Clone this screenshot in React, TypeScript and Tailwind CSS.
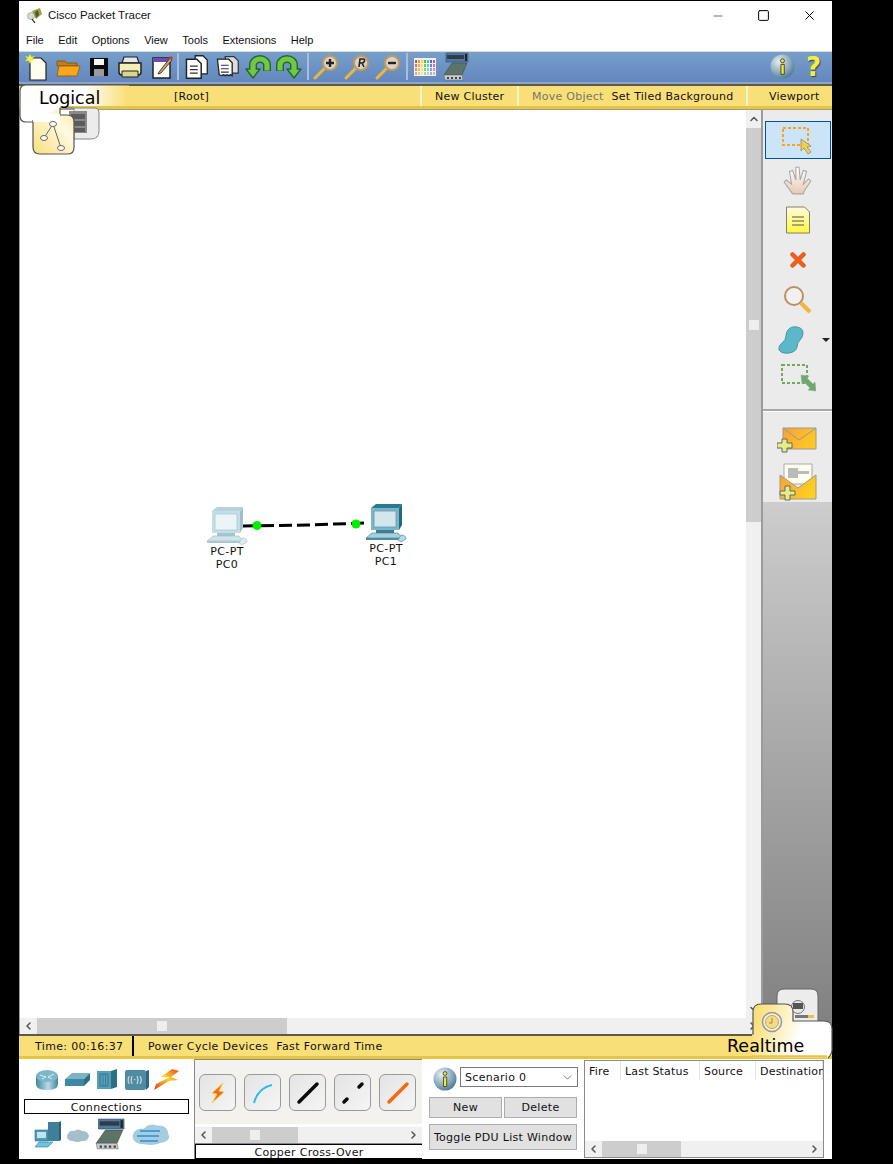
import { ChevronDown, ChevronLeft, ChevronRight, ChevronUp, Minus, Square, X } from 'lucide-react';
import type { ReactNode } from 'react';

const menus = ['File', 'Edit', 'Options', 'View', 'Tools', 'Extensions', 'Help'];

function Magnifier({ mark }: { mark: string }) {
  return (
    <svg viewBox="0 0 28 28" className="w-7 h-7">
      <path d="M3 25 13 15" stroke="#eeb73a" strokeWidth="3" strokeLinecap="round" />
      <circle cx="18" cy="10" r="7" fill="#d8d4cc" stroke="#c49a55" strokeWidth="2" />
      {mark === '+' && <path d="M14 10h8M18 6v8" stroke="#222" strokeWidth="2.4" />}
      {mark === '-' && <path d="M14 10h8" stroke="#222" strokeWidth="2.4" />}
      {mark === 'R' && <path d="M16 14l1-8h3q2 0 1.500 2t-2.500 2h-2M19 10l2 4" stroke="#222" strokeWidth="1.6" fill="none" />}
    </svg>
  );
}

function ArchArrow({ flip }: { flip?: boolean }) {
  return (
    <svg viewBox="0 0 28 26" className="w-7 h-[26px]">
      <g transform={flip ? 'matrix(-1 0 0 1 28 0)' : undefined}>
        <path d="M9 15v-4a7 6 0 0 1 14 0v6" fill="none" stroke="#1c6a2b" strokeWidth="8" />
        <path d="M2 15h14l-7 9z" fill="#74c644" stroke="#1c6a2b" strokeWidth="1.400" strokeLinejoin="round" />
        <path d="M9 16v-5a7 6 0 0 1 14 0v5.500" fill="none" stroke="#74c644" strokeWidth="5.200" />
      </g>
    </svg>
  );
}

function ToolIcon({ children }: { children: ReactNode }) {
  return <div className="w-[31px] h-[31px] flex items-center justify-center shrink-0">{children}</div>;
}

function Sep({ wide }: { wide?: boolean }) {
  return <div className={`w-[2px] h-[27px] bg-[#a9bdd9] mr-[1px] shrink-0 ${wide ? 'ml-[3px]' : 'ml-[1px]'}`} />;
}

function MainToolbar() {
  return (
    <div className="h-[33px] flex items-center pl-[2px] pb-[1px] pr-[3px] bg-gradient-to-b from-[#769fcb] to-[#6487bd] border-t border-[#d9d9d9] border-b-2 border-b-[#8ca6c9] shrink-0">
      <ToolIcon>
        <svg viewBox="0 0 28 28" className="w-7 h-7">
          <path d="M7 5h11l5 5v17H7z" fill="#fffdf0" stroke="#222" strokeWidth="1.2" />
          <path d="M7 1l1.500 3L12 3 9.500 5.500 12 8l-3.500-.6L7 11 5.500 7.400 2 8l2.500-2.500L2 3l3.500 1z" fill="#f7f03c" />
        </svg>
      </ToolIcon>
      <ToolIcon>
        <svg viewBox="0 0 28 28" className="w-7 h-7">
          <path d="M3 8h8l2 2h10v3H3z" fill="#c77f0c" stroke="#73500f" strokeWidth=".8" />
          <path d="M5 13h21l-3 10H3z" fill="#fba51c" stroke="#8c5b0c" strokeWidth=".8" />
        </svg>
      </ToolIcon>
      <ToolIcon>
        <svg viewBox="0 0 28 28" className="w-7 h-7">
          <path d="M5 5h18v18H5z" fill="#0b0b0b" />
          <path d="M9 6h10v6H9z" fill="#f6f6f6" />
          <path d="M9 16h10v7H9z" fill="#9a9a9a" />
        </svg>
      </ToolIcon>
      <ToolIcon>
        <svg viewBox="0 0 28 28" className="w-7 h-7">
          <path d="M8 4h13l2 6H6z" fill="#e7e7e7" stroke="#222" strokeWidth="1.200" />
          <path d="M3 10h22v9q0 3-3 3H6q-3 0-3-3z" fill="#f6efb5" stroke="#222" strokeWidth="1.500" />
          <path d="M6 18h16v6H6z" fill="#d8d58c" stroke="#222" strokeWidth="1" />
        </svg>
      </ToolIcon>
      <ToolIcon>
        <svg viewBox="0 0 28 28" className="w-7 h-7">
          <path d="M6 5h17v20H6z" fill="#fff" stroke="#222" strokeWidth="1.500" />
          <path d="M6 5h17v4H6z" fill="#6e4da8" />
          <path d="M12 19 23 5l2 2-11 13-3 1z" fill="#d9a14e" stroke="#222" strokeWidth=".8" />
          <circle cx="24" cy="5" r="1.800" fill="#d33" />
        </svg>
      </ToolIcon>
      <Sep />
      <ToolIcon>
        <svg viewBox="0 0 30 30" className="w-[26px] h-[26px]">
          <path d="M14 2h9l5 5v16H14z" fill="#fff" stroke="#222" strokeWidth="1.500" />
          <path d="M4 6h12l5 5v17H4z" fill="#fff" stroke="#222" strokeWidth="1.700" />
          <path d="M8 14h9M8 18h9M8 22h9" stroke="#333" strokeWidth="1.500" />
        </svg>
      </ToolIcon>
      <ToolIcon>
        <svg viewBox="0 0 30 30" className="w-[26px] h-[26px]">
          <path d="M13 3h10l5 5v14H13z" fill="#ddd" stroke="#333" strokeWidth="1.400" />
          <path d="M4 6h13l4 4v15l-2-1-2 1-2-1-2 1-2-1-2 1-3-1z" fill="#fff" stroke="#222" strokeWidth="1.500" />
          <path d="M8 13h9M8 17h9M8 21h9" stroke="#333" strokeWidth="1.400" />
        </svg>
      </ToolIcon>
      <ToolIcon><ArchArrow /></ToolIcon>
      <ToolIcon><ArchArrow flip /></ToolIcon>
      <Sep wide />
      <ToolIcon><Magnifier mark="+" /></ToolIcon>
      <ToolIcon><Magnifier mark="R" /></ToolIcon>
      <ToolIcon><Magnifier mark="-" /></ToolIcon>
      <Sep wide />
      <ToolIcon>
        <svg viewBox="0 0 22 18" className="w-[22px] h-[18px]">
          <rect width="22" height="18" fill="#f5f2e8" />
          {[2, 6, 10, 14].map((y, r) =>
            ['#ef4a4a', '#f59a2c', '#ece03a', '#4fc04f', '#3fc0d8', '#4a6ae0', '#c050d0'].map((c, i) => (
              <rect key={`${y}-${c}`} x={1 + i * 3} y={y} width="2" height="3" fill={c} opacity={1 - r * 0.18} />
            )),
          )}
        </svg>
      </ToolIcon>
      <ToolIcon><NetworkModule className="w-[26px] h-[30px]" /></ToolIcon>
      <div className="flex-1" />
      <ToolIcon><InfoBall className="w-[25px] h-[25px]" /></ToolIcon>
      <ToolIcon>
        <span className="font-['DejaVu_Sans',sans-serif] font-bold text-[26px] leading-none text-[#f4ee3c] [text-shadow:1px_1px_1px_#33405f]">?</span>
      </ToolIcon>
    </div>
  );
}

function NetworkModule({ className }: { className: string }) {
  return (
    <svg viewBox="0 0 26 30" className={className}>
      <path d="M3 1h22v9H3z" fill="#4b7ba2" stroke="#2c4f6d" strokeWidth=".6" />
      <path d="M4 3h17v4H4z" fill="#333c44" />
      <path d="M22 2h2v7h-2z" fill="#222" />
      <path d="M9 11h15l-5 12H1z" fill="#5c7468" stroke="#34453c" strokeWidth=".5" />
      <path d="M1 23h18l1 5H2z" fill="#c9cdcf" stroke="#666" strokeWidth=".5" />
      <path d="M4 25h2v2H4zM8 25h2v2H8zM12 25h2v2h-2zM16 25h2v2h-2z" fill="#444" />
    </svg>
  );
}

function InfoBall({ className }: { className: string }) {
  return (
    <svg viewBox="0 0 24 24" className={className}>
      <defs>
        <radialGradient id="ballFill" cx="35%" cy="30%" r="80%">
          <stop offset="0%" stopColor="#e8eef2" />
          <stop offset="60%" stopColor="#88a8bc" />
          <stop offset="100%" stopColor="#47708e" />
        </radialGradient>
      </defs>
      <circle cx="12" cy="12" r="11.500" fill="url(#ballFill)" />
      <path d="M10.500 10h3.200v9.500h-3.200z" fill="#efe92f" stroke="#333" strokeWidth=".8" />
      <circle cx="12" cy="6.500" r="1.900" fill="#efe92f" stroke="#333" strokeWidth=".8" />
    </svg>
  );
}

function ClusterBar() {
  return (
    <div className="h-[25px] flex items-center shrink-0 bg-[#f9df78] border-t-2 border-[#5e5a48] border-b-[3px] border-b-[#e8c53e] text-[11px] text-[#111] tracking-[0.25px] font-['DejaVu_Sans',sans-serif]">
      <div className="w-[401px] pl-[155px] pt-[3px] h-full flex items-center">[Root]</div>
      <div className="w-[97px] h-full flex items-center pl-[13px] pt-[3px] border-l-2 border-[#fdf3c4]">New Cluster</div>
      <div className="w-[229px] h-full flex items-center pl-[13px] pt-[3px] gap-[8px] border-l-2 border-[#fdf3c4]">
        <span className="text-[#77776a]">Move Object</span>
        <span>Set Tiled Background</span>
      </div>
      <div className="flex-1 h-full flex items-center pl-[21px] pt-[3px] border-l-2 border-[#fdf3c4]">Viewport</div>
    </div>
  );
}

function PcIcon({ dark = false }: { dark?: boolean }) {
  return (
    <svg viewBox="0 0 44 40" className="w-[44px] h-10">
      <path d="M7 4 12 0h26l-3 4z" fill={dark ? '#2b7a93' : '#b6d3dc'} />
      <path d="M35 4l3-4v21l-3 5z" fill={dark ? '#1f6a82' : '#9dc2cd'} />
      <path d="M7 4h28v22H7z" fill={dark ? '#7fb4c6' : '#c6dde4'} />
      <path d="M10 7h22v16H10z" fill={dark ? '#d3e6ee' : '#ebf4f7'} stroke={dark ? '#5f9bb0' : '#a9cad4'} strokeWidth=".8" />
      <path d="M12 26h18v3H12z" fill={dark ? '#3a7f96' : '#a5c6d0'} />
      <path d="M8 29h26l4 5H2z" fill={dark ? '#a8cfdc' : '#cfe3e9'} stroke={dark ? '#3b7f96' : '#9cbdc8'} strokeWidth=".6" />
      <path d="M2 34h36v2H2z" fill={dark ? '#4b8ca3' : '#a9c8d2'} />
      <path d="M37 31q5 0 5 4l-5 3-3-2z" fill={dark ? '#bcd9e3' : '#dcebef'} stroke={dark ? '#3b7f96' : '#9cbdc8'} strokeWidth=".6" />
    </svg>
  );
}

function Device({ className, dark, name }: { className: string; dark?: boolean; name: string }) {
  return (
    <div className={`absolute w-[60px] flex flex-col items-center text-[11px] leading-[13px] tracking-[0.4px] text-[#111] font-['DejaVu_Sans',sans-serif] ${className}`}>
      <PcIcon dark={dark} />
      <span className="-mt-[2px]">PC-PT</span>
      <span>{name}</span>
    </div>
  );
}

function Canvas() {
  return (
    <div className="relative flex-1 bg-white">
      {/* link between the two PCs */}
      <svg className="absolute left-[220px] top-[400px] w-[150px] h-[30px]" viewBox="0 0 150 30">
        <path d="M3 16 67 15 126 13" stroke="#000" strokeWidth="3" strokeDasharray="13 5" fill="none" />
        <circle cx="17" cy="15.500" r="4.500" fill="#00f000" />
        <circle cx="116" cy="14" r="4.500" fill="#00f000" />
      </svg>
      <Device className="left-[177px] top-[397px]" name="PC0" />
      <Device className="left-[336px] top-[394px]" dark name="PC1" />
    </div>
  );
}

function VScroll() {
  return (
    <div className="w-[15px] bg-[#f0f0f0] flex flex-col shrink-0">
      <div className="h-[18px] flex items-center justify-center text-[#555]"><ChevronUp size={12} strokeWidth={3} /></div>
      <div className="h-[394px] bg-[#cdcdcd] flex items-center justify-center">
        <div className="w-[10px] h-[10px] bg-[#eeeeee]" />
      </div>
      <div className="flex-1" />
      <div className="h-[18px] flex items-center justify-center text-[#555]"><ChevronDown size={12} strokeWidth={3} /></div>
    </div>
  );
}

function HScroll({ thumb, grip }: { thumb: string; grip: string }) {
  return (
    <div className="h-[16px] bg-[#f0f0f0] flex items-center shrink-0 text-[#555]">
      <ChevronLeft size={12} strokeWidth={3} className="w-[17px] shrink-0" />
      <div className={`h-full bg-[#cdcdcd] flex items-center justify-center shrink-0 ${thumb}`}>
        <div className={`h-[10px] bg-[#eeeeee] ${grip}`} />
      </div>
      <div className="flex-1" />
      <ChevronRight size={12} strokeWidth={3} className="w-[17px] shrink-0" />
    </div>
  );
}

function SideTool({ children }: { children: ReactNode }) {
  return <div className="h-[40px] flex items-center justify-center shrink-0">{children}</div>;
}

function Sidebar() {
  return (
    <div className="w-[71px] flex flex-col shrink-0 border-l-2 border-[#9b9b9b]">
      <div className="h-[392px] bg-[#ebebeb] flex flex-col pt-[11px] shrink-0">
        <div className="h-[38px] ml-[2px] mr-[1px] mb-[1px] bg-[#cce4f7] border border-[#005499] flex items-center justify-center shrink-0">
          <svg viewBox="0 0 34 30" className="w-[34px] h-[30px]">
            <rect x="2" y="3" width="25" height="17" fill="none" stroke="#f5a51e" strokeWidth="2" strokeDasharray="3 2" />
            <path d="M20 14v12l3-3 4 6 3-2-4-5 4-1z" fill="#f5d23d" stroke="#888" strokeWidth=".8" />
          </svg>
        </div>
        <SideTool>
          <svg viewBox="0 0 30 30" className="w-[32px] h-[32px]">
            <defs>
              <linearGradient id="handFill" x1="0" y1="0" x2="0" y2="1">
                <stop offset="0%" stopColor="#ffffff" />
                <stop offset="100%" stopColor="#e6c9b4" />
              </linearGradient>
            </defs>
            <path d="M10 28 2 17l2-2 5 4-2-12 3-1 3 9 0-12h3l1 12 3-9 3 1-3 12 5-5 2 2-6 9-1 3z" fill="url(#handFill)" stroke="#a9a9a9" strokeWidth="1" />
          </svg>
        </SideTool>
        <SideTool>
          <svg viewBox="0 0 26 28" className="w-[26px] h-[28px]">
            <defs>
              <linearGradient id="noteFill" x1="0" y1="0" x2="0" y2="1">
                <stop offset="0%" stopColor="#fffde0" />
                <stop offset="100%" stopColor="#fff83a" />
              </linearGradient>
            </defs>
            <path d="M1.500 1h18l5 5v21h-23z" fill="url(#noteFill)" stroke="#808070" />
            <path d="M7 11h12M7 15h12M7 19h12" stroke="#8a8a70" strokeWidth="1.300" />
          </svg>
        </SideTool>
        <SideTool>
          <X size={22} strokeWidth={5} color="#e9601c" />
        </SideTool>
        <SideTool>
          <svg viewBox="0 0 32 32" className="w-8 h-8">
            <circle cx="12" cy="12" r="9" fill="#fff" fillOpacity=".3" stroke="#c08f5c" strokeWidth="2" />
            <path d="M19 19l9 9" stroke="#eeb73a" strokeWidth="4" />
          </svg>
        </SideTool>
        <div className="h-[40px] flex items-center shrink-0 relative">
          <svg viewBox="0 0 26 28" className="w-[26px] h-[28px] ml-[15px]">
            <path d="M10 4q3-4 9-3t6 6q0 4-3 7t-3 7q-1 5-8 6t-10-3q-1-4 3-7t4-7 2-6z" fill="#5cb8c9" stroke="#4a95a5" strokeWidth="1" />
          </svg>
          <div className="absolute right-[2px] top-[18px] w-0 h-0 border-l-4 border-r-4 border-t-4 border-l-transparent border-r-transparent border-t-[#222]" />
        </div>
        <SideTool>
          <svg viewBox="0 0 36 34" className="w-9 h-[34px]">
            <rect x="2" y="2" width="25" height="18" fill="none" stroke="#72a95c" strokeWidth="2" strokeDasharray="3 2" />
            <path d="M21 12l8 1-2 2 6 6 2-2 1 9-8-1 2-2-6-6-2 2z" fill="#6fa868" stroke="#8aa" strokeWidth=".5" />
          </svg>
        </SideTool>
        <div className="h-[2px] mt-[9px] bg-[#a8a8a8] border-b border-white shrink-0 box-content" />
        <div className="flex-1 flex flex-col items-center pt-[15px] gap-[10px]">
          <svg viewBox="0 0 40 26" className="w-10 h-[26px] shrink-0 -ml-[1px]">
            <path d="M6 1h33v21H6z" fill="url(#mailFill)" stroke="#999" />
            <path d="M6 1 22 13 39 1" fill="none" stroke="#999" />
            <path d="M5 12h5v4h5v5h-5v4H5v-4H0v-5h5z" fill="#e4ee88" stroke="#666" />
          </svg>
          <svg viewBox="0 0 38 38" className="w-[38px] h-[38px] shrink-0">
            <defs>
              <linearGradient id="mailFill" gradientUnits="userSpaceOnUse" x1="0" y1="0" x2="38" y2="26">
                <stop offset="0%" stopColor="#f59a3c" />
                <stop offset="100%" stopColor="#ffd11e" />
              </linearGradient>
            </defs>
            <path d="M5 1h28v20H5z" fill="#fdfdf0" stroke="#aaa" />
            <path d="M9 5h10v3h11v3H19v4H9z" fill="#bbb" />
            <path d="M1 12v24h36V12L19 25z" fill="url(#mailFill)" stroke="#999" />
            <path d="M6 23h5v5h5v4h-5v5H6v-5H1v-4h5z" fill="#e4ee88" stroke="#666" />
          </svg>
        </div>
      </div>
      <div className="flex-1 relative bg-gradient-to-b from-[#cdcdcd] to-[#808080]" />
    </div>
  );
}

function TimeBar() {
  return (
    <div className="h-[25px] flex items-center shrink-0 bg-[#f9df78] border-t-2 border-[#5e5a48] border-b-[3px] border-b-[#e8c53e] text-[11px] text-[#111] tracking-[0.35px] font-['DejaVu_Sans',sans-serif]">
      <div className="w-[115px] pl-[16px] pt-[3px] h-full flex items-center border-r-2 border-black">Time: 00:16:37</div>
      <div className="pl-[14px] pt-[3px] flex gap-[8px]">
        <span>Power Cycle Devices</span>
        <span>Fast Forward Time</span>
      </div>
    </div>
  );
}

function DeviceTypes() {
  return (
    <div className="w-[175px] bg-white flex flex-col items-center shrink-0 pt-[9px]">
      <svg viewBox="0 0 146 24" className="w-[146px] h-[24px] shrink-0">
        <defs>
          <linearGradient id="routerFill" x1="0" y1="0" x2="1" y2="0">
            <stop offset="0%" stopColor="#3f87a3" />
            <stop offset="55%" stopColor="#b9dbe5" />
            <stop offset="100%" stopColor="#3f87a3" />
          </linearGradient>
          <linearGradient id="boltFill" x1="0" y1="1" x2="1" y2="0">
            <stop offset="0%" stopColor="#e23a20" />
            <stop offset="55%" stopColor="#f9d423" />
            <stop offset="100%" stopColor="#ea4020" />
          </linearGradient>
        </defs>
        <path d="M2 7v9q0 6 11 6t11-6V7z" fill="url(#routerFill)" />
        <ellipse cx="13" cy="8" rx="11" ry="6" fill="#7fb6ca" />
        <path d="M6 7l6 2M20 6l-6 3M8 11l4-2M18 11l-4-2" stroke="#d6ecf2" strokeWidth="1" />
        <path d="M31 11 38 5h18l-6 6z" fill="#7db3c6" />
        <path d="M31 11h19v7H31z" fill="#3e8aa6" />
        <path d="M50 11l6-6v7l-6 6z" fill="#2c7088" />
        <path d="M63 3h14v18H63z" fill="#5c9db5" />
        <path d="M77 3l6-2v18l-6 2z" fill="#2c7088" />
        <path d="M66 6h8v12h-8z" fill="none" stroke="#2f7d98" strokeWidth="1" />
        <path d="M69 6v12M71.500 6v12" stroke="#2f7d98" strokeWidth=".8" />
        <rect x="91" y="2" width="21" height="20" rx="2" fill="#4f8ba3" />
        <path d="M112 3l3-1v17l-3 3z" fill="#2c6a82" />
        <text x="93" y="15" fontSize="8" fill="#fff" fontFamily="DejaVu Sans">((·))</text>
        <path d="M138 1l-11 8 9 0-14 7-2 6 15-9 9-1-7-3 8-6z" fill="url(#boltFill)" />
      </svg>
      <div className="w-[165px] h-[15px] mt-[7px] border border-black text-center text-[11px] leading-[15px] tracking-[0.3px] text-[#111] font-['DejaVu_Sans',sans-serif]">Connections</div>
      <svg viewBox="0 0 146 34" className="w-[146px] h-[34px] mt-[4px] shrink-0">
        <path d="M1 12h13v11H1z" fill="#4f9ab6" stroke="#2f6f88" strokeWidth=".6" />
        <path d="M3 14h9v6H3z" fill="#bfe4ef" />
        <path d="M14 4h11v19H14z" fill="#3f7f99" />
        <path d="M25 4l2-1v19l-2 1z" fill="#2c6278" />
        <path d="M5 24h14l-5 5H1z" fill="#6dc4dc" stroke="#2f7f98" strokeWidth=".6" />
        <path d="M33 18q2-6 7-5 4-3 8 0 6 0 7 5-1 6-7 5-5 2-9 0-6 0-6-5z" fill="#a5bfca" />
        <g transform="translate(61 0) scale(1.160 1.100)">
          <path d="M3 1h22v9H3z" fill="#4b7ba2" stroke="#2c4f6d" strokeWidth=".6" />
          <path d="M4 3h17v4H4z" fill="#333c44" />
          <path d="M22 2h2v7h-2z" fill="#222" />
          <path d="M9 11h15l-5 12H1z" fill="#5c7468" stroke="#34453c" strokeWidth=".5" />
          <path d="M1 23h18l1 5H2z" fill="#c9cdcf" stroke="#666" strokeWidth=".5" />
          <path d="M4 25h2v2H4zM8 25h2v2H8zM12 25h2v2h-2zM16 25h2v2h-2z" fill="#444" />
        </g>
        <path d="M99 18q1-8 11-7 5-6 14-3 9-1 10 8 3 6-5 8-10 4-18 2-12 0-12-8z" fill="#a4cde0" stroke="#8fbcd0" strokeWidth=".5" />
        <path d="M106 13h20M103 18h22M106 23h18" stroke="#4f9bd8" strokeWidth="2" />
      </svg>
    </div>
  );
}

function CableButton({ children }: { children: ReactNode }) {
  return (
    <div className="w-[37px] h-[37px] rounded-[6px] border border-[#9a9a9a] bg-gradient-to-br from-[#e4e4e4] to-[#f5f5f5] shrink-0 flex items-center justify-center">
      <svg viewBox="0 0 26 26" className="w-[26px] h-[26px]">{children}</svg>
    </div>
  );
}

function CablePanel() {
  return (
    <div className="w-[228px] flex flex-col shrink-0 border-l border-[#888]">
      <div className="flex-1 bg-[#f3f2ef] flex gap-[8px] pl-[4px] pt-[14px] border-t border-[#888]">
        <CableButton>
          <path d="M18 3 7 13l5 1-5 9 12-11-5-1z" fill="#f26a1c" stroke="#f5d23d" strokeWidth="1" />
        </CableButton>
        <CableButton>
          <path d="M4 23Q8 8 22 5" fill="none" stroke="#24bff0" strokeWidth="2" />
        </CableButton>
        <CableButton>
          <path d="M4 22 22 4" stroke="#0a0a0a" strokeWidth="3.500" strokeLinecap="round" />
        </CableButton>
        <CableButton>
          <path d="M4 22l3-3M19 7l3-3" stroke="#0a0a0a" strokeWidth="3.500" strokeLinecap="round" />
        </CableButton>
        <CableButton>
          <path d="M4 22 22 4" stroke="#f46a12" strokeWidth="3.500" strokeLinecap="round" />
        </CableButton>
      </div>
      <div className="border-t-[3px] border-white border-b border-b-[#888]">
        <HScroll thumb="w-[86px]" grip="w-[10px]" />
      </div>
      <div className="h-[15px] bg-white border border-black text-center text-[11px] leading-[15px] tracking-[0.3px] text-[#111] font-['DejaVu_Sans',sans-serif] -mr-[1px]">Copper Cross-Over</div>
    </div>
  );
}

function PduControls() {
  const btn = 'bg-[#e1e1e1] border border-[#adadad] text-[11px] tracking-[0.3px] text-[#111] flex items-center justify-center pt-[2px]';
  return (
    <div className="w-[162px] bg-white shrink-0 pl-[7px] pr-[6px] pt-[7px] flex flex-col font-['DejaVu_Sans',sans-serif]">
      <div className="flex items-start gap-[3px] h-[24px] pl-[4px]">
        <InfoBall className="w-6 h-6 shrink-0 mt-[1px]" />
        <div className="w-[118px] h-[20px] mt-[1px] border border-[#7a7a7a] flex items-center justify-between pl-[4px] pr-[3px] pt-[3px] text-[11px] tracking-[0.3px] text-[#111]">
          Scenario 0
          <ChevronDown size={13} strokeWidth={1.500} className="text-[#555] -mt-[2px]" />
        </div>
      </div>
      <div className="flex gap-[2px] mt-[7px]">
        <div className={`${btn} w-[73px] h-[21px]`}>New</div>
        <div className={`${btn} w-[73px] h-[21px]`}>Delete</div>
      </div>
      <div className={`${btn} w-[148px] h-[26px] mt-[6px]`}>Toggle PDU List Window</div>
    </div>
  );
}

function PduTable() {
  const cols = [
    { label: 'Fire', w: 'w-[36px]' },
    { label: 'Last Status', w: 'w-[79px]' },
    { label: 'Source', w: 'w-[56px]' },
    { label: 'Destination', w: 'w-[67px]' },
  ];
  return (
    <div className="w-[240px] h-[98px] mt-[1px] border border-[#8a8a8a] flex flex-col bg-white shrink-0 overflow-hidden font-['DejaVu_Sans',sans-serif]">
      <div className="h-[19px] flex text-[11px] tracking-[0.2px] text-[#111] shrink-0">
        {cols.map((c) => (
          <div key={c.label} className={`${c.w} pl-[4px] leading-[21px] border-r border-[#e5e5e5] whitespace-nowrap shrink-0`}>{c.label}</div>
        ))}
      </div>
      <div className="flex-1" />
      <HScroll thumb="w-[79px]" grip="w-[10px]" />
    </div>
  );
}

function Tabs() {
  return (
    <>
      {/* Logical tab with the physical tab behind it */}
      <svg className="absolute left-[19px] top-[84px] w-[110px] h-[72px]" viewBox="0 0 110 72">
        <defs>
          <linearGradient id="logicalFill" gradientUnits="userSpaceOnUse" x1="0" y1="0" x2="108" y2="0">
            <stop offset="0%" stopColor="#fff" />
            <stop offset="60%" stopColor="#fff" />
            <stop offset="100%" stopColor="#f9df78" />
          </linearGradient>
          <linearGradient id="logicalTab" x1="0" y1="1" x2="1" y2="0">
            <stop offset="0%" stopColor="#f9df78" />
            <stop offset="65%" stopColor="#fff9e2" />
            <stop offset="100%" stopColor="#fbe9a0" />
          </linearGradient>
        </defs>
        <path d="M41 24H76q4 0 4 4V47q0 8-8 8H55V24z" fill="#ececec" stroke="#888" />
        <path d="M50 27h18v22H50z" fill="#8a8a8a" />
        <path d="M52 30h14v5H52zM52 37h14v5H52zM52 44h14v4H52z" fill="#5c5c5c" />
        <path d="M1 7Q1 1 7 1H110V22H41V38H7Q1 38 1 32z" fill="url(#logicalFill)" />
        <path d="M110 1H7Q1 1 1 7V32Q1 38 7 38H14" fill="none" stroke="#555" strokeWidth="1.200" />
        <path d="M14 38V63Q14 70 21 70H49Q55 70 55 63V38Q55 31 48 31H41V24L14 38z" fill="url(#logicalTab)" />
        <path d="M14 36V63Q14 70 21 70H49Q55 70 55 63V38Q55 31 48 31H41V24" fill="none" stroke="#555" strokeWidth="1.200" />
        <path d="M14 36V30H41V38H14z" fill="url(#logicalFill)" />
        <path d="M34 40 25 54M34 40 42 64" stroke="#666" fill="none" />
        <ellipse cx="34" cy="40" rx="3.500" ry="2.500" fill="#fff" stroke="#666" />
        <ellipse cx="25" cy="54" rx="3.500" ry="2.500" fill="#fff" stroke="#666" />
        <ellipse cx="42" cy="64" rx="3.500" ry="2.500" fill="#fff" stroke="#666" />
      </svg>
      <span className="absolute left-[39px] top-[88px] text-[17.500px] leading-[20px] text-black font-['DejaVu_Sans',sans-serif]">Logical</span>

      {/* Realtime tab with the simulation tab behind it */}
      <svg className="absolute left-[752px] top-[988px] w-[81px] h-[71px]" viewBox="0 0 81 71">
        <defs>
          <linearGradient id="realtimeFill" x1="0" y1="0" x2="1" y2="0.2">
            <stop offset="8%" stopColor="#f9df78" />
            <stop offset="70%" stopColor="#fff" />
          </linearGradient>
        </defs>
        <path d="M25 36V8q0-7 7-7h27q7 0 7 7v28z" fill="#ececec" stroke="#666" />
        <circle cx="46" cy="19" r="6.500" fill="#e7e7e7" stroke="#777" />
        <path d="M41 15h10v6H41z" fill="#555" />
        <path d="M43 27h13v3H43z" fill="#777" />
        <path d="M56 27h6v3h-6z" fill="#e8c53e" />
        <path d="M1 46V24Q1 16 9 16H33Q41 16 41 24V33H72Q80 33 80 41V62Q80 66 76 70H0V46z" fill="url(#realtimeFill)" />
        <path d="M0 46H1V24Q1 16 9 16H33Q41 16 41 24V33H72Q80 33 80 41V62Q80 66 76 70" fill="none" stroke="#555" strokeWidth="1.200" />
        <path d="M0 68.500H75" stroke="#e8c53e" strokeWidth="2.500" />
        <circle cx="20" cy="34" r="9.500" fill="#f5f0da" stroke="#999" strokeWidth="1.500" />
        <circle cx="20" cy="34" r="6.500" fill="#f5dc80" stroke="#b9a970" />
        <path d="M20 30v5h-3" stroke="#998a4f" fill="none" />
      </svg>
      <span className="absolute left-[727px] top-[1036px] text-[17.500px] leading-[20px] text-black font-['DejaVu_Sans',sans-serif]">Realtime</span>
    </>
  );
}

export default function App() {
  return (
    <div className="relative w-[893px] h-[1164px] bg-black pl-[19px] pt-px overflow-hidden">
      <div className="w-[813px] h-[1158px] bg-white flex flex-col">
        {/* Title bar */}
        <div className="h-[27px] flex items-center shrink-0 pl-[8px] pt-[2px]">
          <svg viewBox="0 0 16 16" className="w-4 h-4">
            <path d="M5 3l8-3 2 6-6 5z" fill="#b99545" />
            <path d="M8 4l3-2 1 5-3 3z" fill="#2c6b30" />
            <circle cx="4" cy="8" r="3.500" fill="#cfe0cf" stroke="#777" strokeWidth=".5" />
            <path d="M5 11l3 4" stroke="#222" strokeWidth="1.200" />
          </svg>
          <span className="ml-[5px] pt-[1px] text-[11.500px] text-[#111] font-['Liberation_Sans',sans-serif]">Cisco Packet Tracer</span>
          <div className="flex-1" />
          <Minus size={14} strokeWidth={1} className="text-black mr-[32px]" />
          <Square size={13} strokeWidth={1} absoluteStrokeWidth className="text-black mr-[32px]" />
          <X size={15} strokeWidth={1} absoluteStrokeWidth className="text-black mr-[15px]" />
        </div>
        {/* Menu */}
        <div className="h-[23px] flex items-center shrink-0 pl-[7px] pt-[2px] gap-[14.500px] text-[11px] text-[#111] font-['Liberation_Sans',sans-serif]">
          {menus.map((m) => (
            <span key={m}>{m}</span>
          ))}
        </div>
        <MainToolbar />
        <ClusterBar />
        {/* Workspace */}
        <div className="flex-1 flex min-h-0 border-t border-[#9b9b9b]">
          <div className="flex-1 flex flex-col min-w-0 border-l border-[#9b9b9b]">
            <div className="flex-1 flex min-h-0">
              <Canvas />
              <VScroll />
            </div>
            <HScroll thumb="w-[250px]" grip="w-[10px]" />
          </div>
          <Sidebar />
        </div>
        <TimeBar />
        {/* Bottom panel */}
        <div className="h-[100px] flex shrink-0 bg-white">
          <DeviceTypes />
          <CablePanel />
          <PduControls />
          <PduTable />
        </div>
      </div>
      <Tabs />
    </div>
  );
}
